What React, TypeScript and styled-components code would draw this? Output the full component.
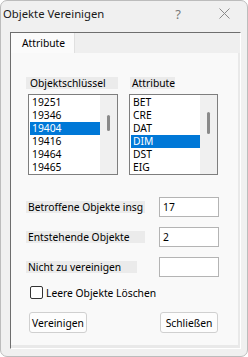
import styled, { createGlobalStyle } from 'styled-components';

const Global = createGlobalStyle`
  html, body {
    margin: 0;
    padding: 0;
    background: #ffffff;
  }
  * {
    box-sizing: border-box;
  }
`;

const Window = styled.div`
  width: 248px;
  height: 357px;
  border: 1px solid #bcbcbc;
  border-radius: 7px;
  background: #f0f0f0;
  display: flex;
  flex-direction: column;
  font-family: 'Noto Sans', 'Open Sans', sans-serif;
  font-size: 10.3px;
  color: #000;
  overflow: hidden;
`;

const TitleBar = styled.div`
  height: 25px;
  display: flex;
  align-items: center;
  padding-left: 2px;
  font-size: 11.3px;
  color: #1a1a1a;
`;

const Title = styled.span`
  flex: 1;
`;

const TitleButton = styled.span`
  width: 46px;
  display: flex;
  justify-content: center;
  align-items: center;
  color: #7a7a7a;
  font-size: 13px;
`;

const Body = styled.div`
  flex: 1;
  padding: 6px 6px 7px 9px;
  display: flex;
`;

const TabFrame = styled.div`
  flex: 1;
  display: flex;
  flex-direction: column;
  border-top: 1px solid #6e6e6e;
  border-left: 1px solid #6e6e6e;
  border-right: 1px solid #ffffff;
  border-bottom: 1px solid #ffffff;
  background: #e9e9e9;
`;

const TabStrip = styled.div`
  height: 20px;
  display: flex;
  background: #efefef;
`;

const Tab = styled.div`
  width: 64px;
  background: #fbfbfb;
  border-right: 1px solid #e0e0e0;
  padding-left: 11px;
  display: flex;
  align-items: center;
`;

const Panel = styled.div`
  flex: 1;
  margin: 0 2px 3px 0;
  background: #f9f9f9;
  padding: 24px 0 0 15px;
  display: flex;
  flex-direction: column;
`;

const ListsRow = styled.div`
  display: flex;
  gap: 11px;
`;

const Column = styled.div<{ $listWidth: number; $labelWidth: number; $shift: number }>`
  display: flex;
  flex-direction: column;
  width: ${(p) => p.$listWidth + 2}px;

  & > span {
    width: ${(p) => p.$labelWidth}px;
    margin-left: ${(p) => (p.$shift < 0 ? 0 : p.$shift)}px;
  }
  & > div {
    width: ${(p) => p.$listWidth}px;
    margin-left: ${(p) => (p.$shift < 0 ? -p.$shift : 0)}px;
  }
`;

const GroupLabel = styled.span<{ $pad: number }>`
  height: 12px;
  line-height: 12px;
  background: #ebebeb;
  padding-left: ${(p) => p.$pad}px;
  margin-bottom: 5px;
  white-space: nowrap;
`;

const ListBox = styled.div`
  height: 81px;
  border: 1px solid #7e7e7e;
  background: #ffffff;
  display: flex;
  padding: 1px 0 1px 1px;
`;

const Items = styled.div`
  flex: 1;
  display: flex;
  flex-direction: column;
`;

const Item = styled.div<{ $selected?: boolean }>`
  height: 13px;
  line-height: 13px;
  padding-left: 2px;
  background: ${(p) => (p.$selected ? '#0078d7' : 'transparent')};
  color: ${(p) => (p.$selected ? '#ffffff' : '#000000')};
`;

const ScrollTrack = styled.div`
  width: 17px;
  margin-top: -1px;
  margin-bottom: -1px;
  background: #f0f0f0;
  position: relative;
`;

const Thumb = styled.div<{ $top: number; $height: number }>`
  position: absolute;
  left: 7px;
  top: ${(p) => p.$top}px;
  width: 3px;
  height: ${(p) => p.$height}px;
  border-radius: 2px;
  background: #8a8a8a;
`;

const Fields = styled.div`
  margin-top: 22px;
  display: flex;
  flex-direction: column;
  gap: 10px;
`;

const FieldRow = styled.div`
  display: flex;
  align-items: center;
  height: 20px;
`;

const FieldLabel = styled.span<{ $width: number }>`
  width: ${(p) => p.$width}px;
  height: 12px;
  line-height: 12px;
  background: #ebebeb;
  padding-left: 2px;
  white-space: nowrap;
`;

const Input = styled.div<{ $offset: number }>`
  margin-left: ${(p) => p.$offset}px;
  width: 60px;
  height: 20px;
  border: 1px solid #b4b4b4;
  background: #ffffff;
  padding-left: 3px;
  line-height: 18px;
`;

const CheckRow = styled.label`
  margin: 9px 0 0 4px;
  display: flex;
  align-items: center;
  gap: 3px;
  height: 13px;
`;

const CheckBox = styled.span`
  width: 13px;
  height: 13px;
  border: 1px solid #333333;
  border-radius: 2px;
  background: #ffffff;
`;

const Buttons = styled.div`
  margin: 13px 0 0 3px;
  width: 189px;
  display: flex;
  justify-content: space-between;
`;

const Button = styled.button`
  width: 58px;
  height: 21px;
  padding: 0;
  border: 1px solid #d0d0d0;
  border-radius: 3px;
  background: #fdfdfd;
  font-family: inherit;
  font-size: 10.3px;
  color: #000;
`;

const keys = ['19251', '19346', '19404', '19416', '19464', '19465'];
const attrs = ['BET', 'CRE', 'DAT', 'DIM', 'DST', 'EIG'];

export default function App() {
  return (
    <>
      <Global />
      <Window>
        <TitleBar>
          <Title>Objekte Vereinigen</Title>
          <TitleButton>?</TitleButton>
          <TitleButton>
            <svg width="11" height="11" viewBox="0 0 11 11">
              <path d="M0.5 0.5 L10.5 10.5 M10.5 0.5 L0.5 10.5" stroke="#8a8a8a" strokeWidth="1" />
            </svg>
          </TitleButton>
        </TitleBar>
        <Body>
          <TabFrame>
            <TabStrip>
              <Tab>Attribute</Tab>
            </TabStrip>
            <Panel>
              <ListsRow>
                <Column $listWidth={90} $labelWidth={92} $shift={-2}>
                  <GroupLabel $pad={4}>Objektschlüssel</GroupLabel>
                  <ListBox>
                    <Items>
                      {keys.map((k) => (
                        <Item key={k} $selected={k === '19404'}>
                          {k}
                        </Item>
                      ))}
                    </Items>
                    <ScrollTrack>
                      <Thumb $top={20} $height={16} />
                    </ScrollTrack>
                  </ListBox>
                </Column>
                <Column $listWidth={89} $labelWidth={45} $shift={1}>
                  <GroupLabel $pad={2}>Attribute</GroupLabel>
                  <ListBox>
                    <Items>
                      {attrs.map((a) => (
                        <Item key={a} $selected={a === 'DIM'}>
                          {a}
                        </Item>
                      ))}
                    </Items>
                    <ScrollTrack>
                      <Thumb $top={17} $height={22} />
                    </ScrollTrack>
                  </ListBox>
                </Column>
              </ListsRow>
              <Fields>
                <FieldRow>
                  <FieldLabel $width={119}>Betroffene Objekte insg</FieldLabel>
                  <Input $offset={14}>17</Input>
                </FieldRow>
                <FieldRow>
                  <FieldLabel $width={119}>Entstehende Objekte</FieldLabel>
                  <Input $offset={14}>2</Input>
                </FieldRow>
                <FieldRow>
                  <FieldLabel $width={111}>Nicht zu vereinigen</FieldLabel>
                  <Input $offset={22} />
                </FieldRow>
              </Fields>
              <CheckRow>
                <CheckBox />
                Leere Objekte Löschen
              </CheckRow>
              <Buttons>
                <Button>Vereinigen</Button>
                <Button>Schließen</Button>
              </Buttons>
            </Panel>
          </TabFrame>
        </Body>
      </Window>
    </>
  );
}
